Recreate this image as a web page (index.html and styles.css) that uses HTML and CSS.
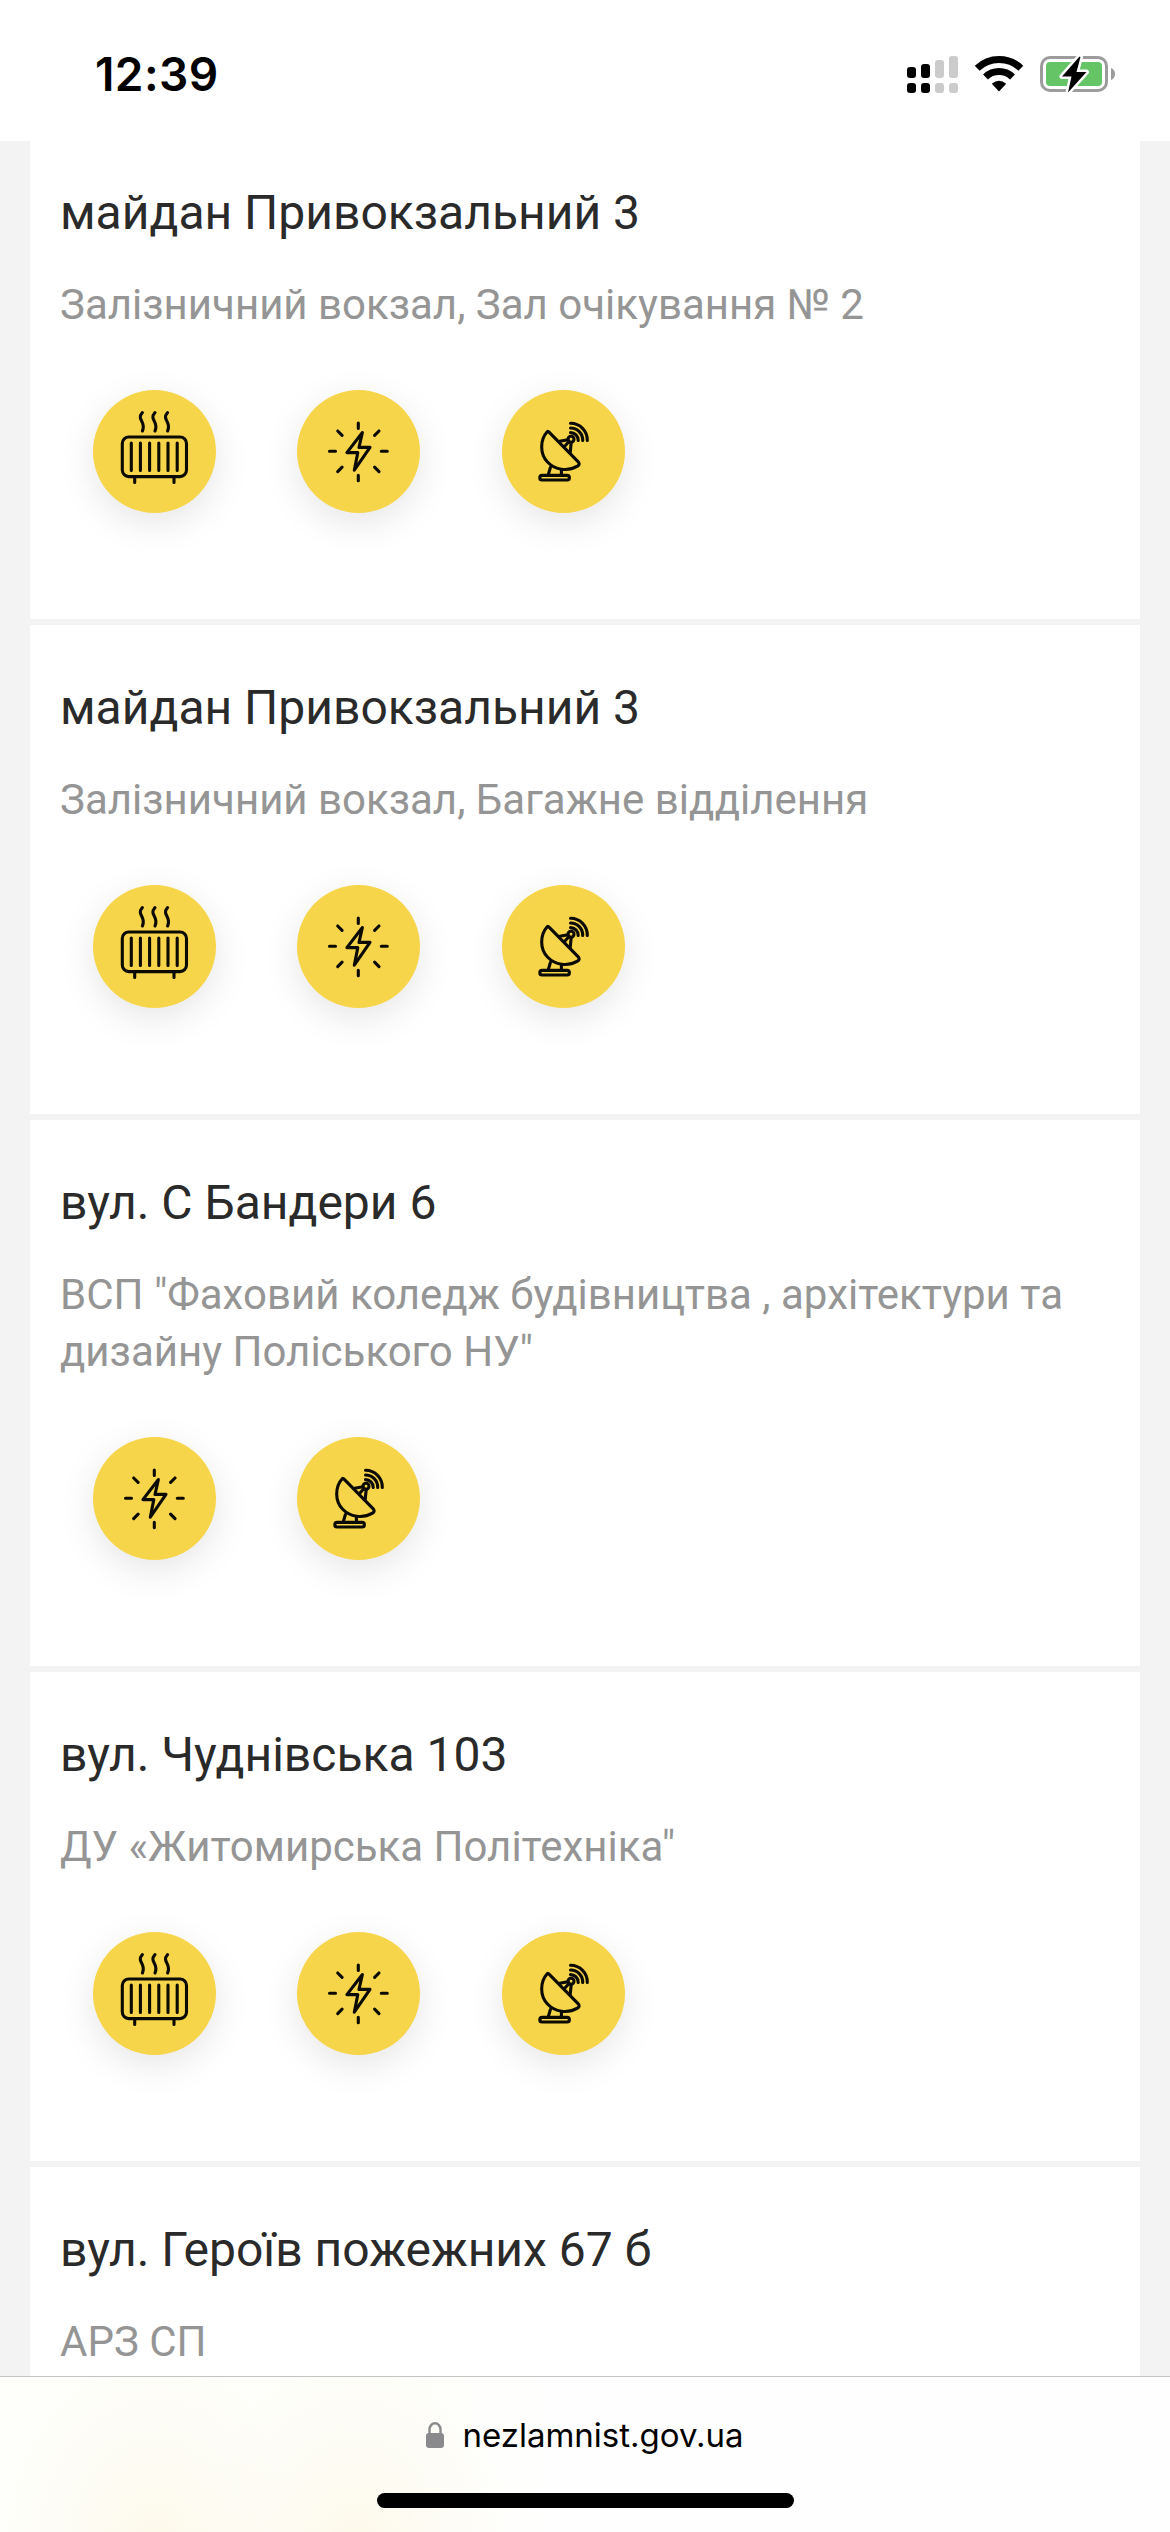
FILE: index.html
```html
<!DOCTYPE html>
<html lang="uk">
<head>
<meta charset="utf-8">
<title>nezlamnist.gov.ua</title>
<link rel="stylesheet" href="styles.css">
</head>
<body>
<svg class="sprite" aria-hidden="true">
  <symbol id="heat" viewBox="0 0 123 123">
    <rect x="29.3" y="47" width="64.2" height="39.6" rx="6.5"/>
    <path d="M38.3 53v27.4M47.4 53v27.4M56.6 53v27.4M65.8 53v27.4M75 53v27.4M84.2 53v27.4M41.7 87.5v5M81 87.5v5"/>
    <path d="M49.4 22.6c-6.4 7.6 4.4 8.8 0 18.4M62 22.6c-6.4 7.6 4.4 8.8 0 18.4M74.6 22.6c-6.4 7.6 4.4 8.8 0 18.4"/>
  </symbol>
  <symbol id="power" viewBox="0 0 123 123">
    <path d="M61.300 33v5.500M61.300 85.300v5.500M32.500 61.300h6M84.300 61.300h6M40.700 41l4.400 4.400M82 41l-4.400 4.400M40.700 81.600l4.400-4.400M82 81.600l-4.400-4.400"/>
    <path d="M65.400 42.500 49.900 62.600h10.900l-3.500 17.600L73 57.400H62z"/>
  </symbol>
  <symbol id="dish" viewBox="0 0 123 123">
    <path d="M45.200 41.800C37.800 50 37.800 64 45.500 72C53 80 65.500 82 75.500 76.200Q78.200 74.300 76.500 72.200L46.800 41.900Q46 41 45.200 41.800z"/>
    <circle cx="69" cy="49.300" r="3"/>
    <path d="m57.700 51.200 8.300-1.500M62.500 56.500l4.500-5M68.200 62.500l1-10M48.400 77.500 46.200 85M59.400 80.500V85"/>
    <rect x="37.800" y="85.400" width="29.600" height="4.600" rx="2.300"/>
    <path d="M68.500 33.300a16.700 16.700 0 0 1 16.800 17.200M68.500 38a12.200 12.200 0 0 1 12.200 12.500M68.500 42.600a7.700 7.700 0 0 1 7.700 7.900"/>
  </symbol>
</svg>

<header class="status">
  <time class="clock">12:39</time>
  <div class="indicators">
    <svg class="cellular" width="52" height="38" viewBox="0 0 52 38">
      <g fill="#000"><rect x="0" y="12" width="9" height="11" rx="3"/><rect x="14" y="9" width="9" height="14" rx="3"/><rect x="0" y="28" width="9" height="10" rx="3"/><rect x="14" y="28" width="9" height="10" rx="3"/></g>
      <g fill="#cbcbcb"><rect x="28" y="5" width="9" height="18" rx="3"/><rect x="42" y="1" width="9" height="22" rx="3"/><rect x="28" y="28" width="9" height="10" rx="3"/><rect x="42" y="28" width="9" height="10" rx="3"/></g>
    </svg>
    <svg class="wifi" width="50" height="38" viewBox="0 0 50 38">
      <g fill="none" stroke="#000" stroke-width="7"><path d="M3.200 13.200a31.500 31.500 0 0 1 43.600 0"/><path d="M11.500 22a19.500 19.500 0 0 1 27 0"/></g>
      <path d="M17.800 28.800Q25 22.800 32.200 28.800L25 36.500z"/>
    </svg>
    <svg class="battery" width="76" height="38" viewBox="0 0 76 38">
      <rect x="1.500" y="2.500" width="65" height="33" rx="8.500" fill="none" stroke="#9c9c9c" stroke-width="3"/>
      <path d="M71 13q4 1.500 4 6t-4 6z" fill="#9c9c9c"/>
      <rect x="6" y="7" width="56" height="24" rx="4" fill="#65c466"/>
      <path d="M39.500 1.500 22 21.500h9.500L28 37.500 46.500 17H36.500L40.500 2z" fill="#000" stroke="#fff" stroke-width="5" stroke-linejoin="round" paint-order="stroke"/>
    </svg>
  </div>
</header>

<main class="places">
  <article class="place">
    <h2 class="address">майдан Привокзальний 3</h2>
    <p class="name">Залізничний вокзал, Зал очікування № 2</p>
    <div class="services">
      <svg class="service"><use href="#heat"/></svg>
      <svg class="service"><use href="#power"/></svg>
      <svg class="service"><use href="#dish"/></svg>
    </div>
  </article>
  <article class="place">
    <h2 class="address">майдан Привокзальний 3</h2>
    <p class="name">Залізничний вокзал, Багажне відділення</p>
    <div class="services">
      <svg class="service"><use href="#heat"/></svg>
      <svg class="service"><use href="#power"/></svg>
      <svg class="service"><use href="#dish"/></svg>
    </div>
  </article>
  <article class="place">
    <h2 class="address">вул. С Бандери 6</h2>
    <p class="name">ВСП "Фаховий коледж будівництва , архітектури та дизайну Поліського НУ"</p>
    <div class="services">
      <svg class="service"><use href="#power"/></svg>
      <svg class="service"><use href="#dish"/></svg>
    </div>
  </article>
  <article class="place">
    <h2 class="address">вул. Чуднівська 103</h2>
    <p class="name">ДУ «Житомирська Політехніка"</p>
    <div class="services">
      <svg class="service"><use href="#heat"/></svg>
      <svg class="service"><use href="#power"/></svg>
      <svg class="service"><use href="#dish"/></svg>
    </div>
  </article>
  <article class="place">
    <h2 class="address">вул. Героїв пожежних 67 б</h2>
    <p class="name">АРЗ СП</p>
  </article>
</main>

<footer class="browser-bar">
  <div class="site">
    <svg class="lock" width="18" height="26" viewBox="0 0 18 26">
      <path d="M3.500 12V7.500a5.500 6.200 0 0 1 11 0V12" fill="none" stroke="#8a8a8d" stroke-width="2.400"/>
      <rect x="0" y="11" width="18" height="15" rx="3" fill="#8a8a8d"/>
    </svg>
    <span class="domain">nezlamnist.gov.ua</span>
  </div>
  <div class="home-indicator"></div>
</footer>
</body>
</html>
```
FILE: styles.css
```css
* { box-sizing: border-box; }

body {
  margin: 0;
  width: 1170px;
  height: 2532px;
  display: flex;
  flex-direction: column;
  overflow: hidden;
  background: #f3f3f3;
  font-family: Roboto, sans-serif;
}

.sprite { display: none; }

.status {
  flex: none;
  height: 141px;
  padding: 0 54px 0 95px;
  display: flex;
  justify-content: space-between;
  background: #fff;
}

.clock {
  margin-top: 46px;
  font: 600 46px/56px Inter, sans-serif;
  letter-spacing: .4px;
  color: #000;
}

.indicators {
  display: flex;
  align-items: flex-start;
  margin-top: 55px;
}

.wifi { margin-left: 15px; }
.battery { margin-left: 16px; }

/* the first card is scrolled slightly under the status bar */
.places {
  flex: 1;
  min-height: 0;
  overflow: hidden;
  padding: 0 30px;
}

.place {
  padding: 54px 30px 106px;
  border-bottom: 6px solid #f3f3f3;
  background: #fff;
}

.place:first-child { padding-top: 43px; }

.address {
  margin: 0 0 35px;
  font-size: 48px;
  font-weight: 400;
  line-height: 57px;
  color: #2a2a2a;
}

.name {
  margin: 0;
  font-size: 42px;
  line-height: 57px;
  color: #959595;
}

.services {
  display: flex;
  gap: 81.5px;
  margin-top: 57px;
  padding-left: 32.5px;
}

.service {
  width: 123px;
  height: 123px;
  border-radius: 50%;
  background: #f7d54a;
  box-shadow: 0 10px 36px rgba(0, 0, 0, .1);
  fill: none;
  stroke: #0b0a03;
  stroke-width: 3.1;
  stroke-linecap: round;
  stroke-linejoin: round;
}

.browser-bar {
  flex: none;
  height: 156px;
  border-top: 1px solid #c3c3c5;
  display: flex;
  flex-direction: column;
  align-items: center;
  background:
    radial-gradient(ellipse 150px 190px at 155px 110%, rgba(252, 246, 224, .6), rgba(252, 248, 232, .3) 55%, transparent),
    radial-gradient(ellipse 160px 190px at 355px 110%, rgba(252, 246, 224, .6), rgba(252, 248, 232, .3) 55%, transparent),
    linear-gradient(90deg, #fefefa 0, #fefefa 35%, #fefefe 48%);
}

.site {
  height: 116px;
  padding-top: 37px;
  display: flex;
  align-items: flex-start;
  gap: 18px;
  color: #000;
  font: 400 33px/42px Inter, sans-serif;
}

.lock { margin-top: 8px; }

.home-indicator {
  width: 417px;
  height: 15px;
  border-radius: 8px;
  background: #000;
}
```
